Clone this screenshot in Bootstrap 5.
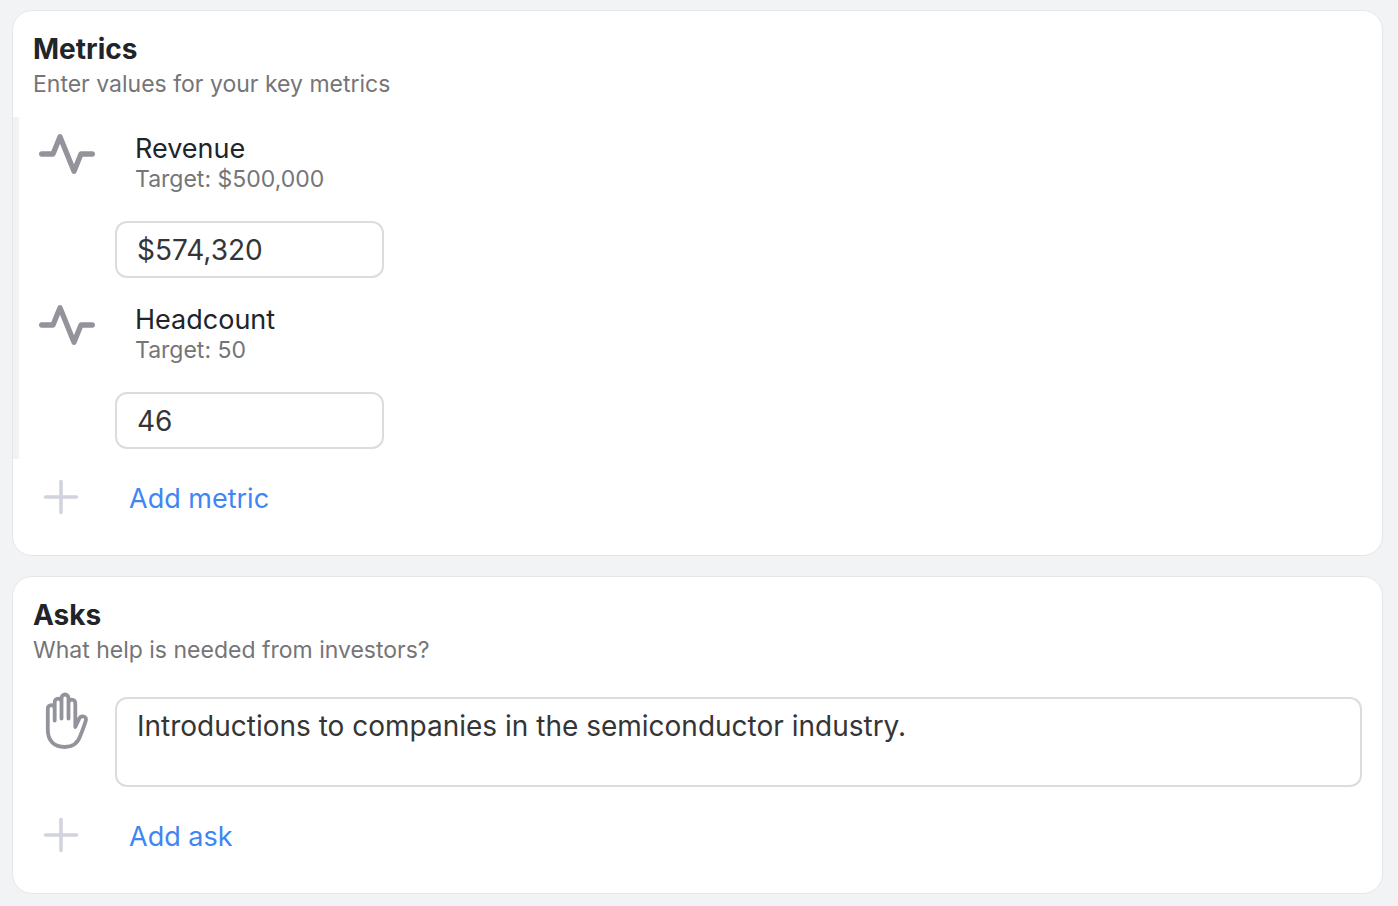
<!DOCTYPE html>
<html lang="en">
<head>
<meta charset="utf-8">
<meta name="viewport" content="width=device-width, initial-scale=1">
<title>Metrics and asks</title>
<link href="https://cdn.jsdelivr.net/npm/bootstrap@5.3.0/dist/css/bootstrap.min.css" rel="stylesheet">
<style>
body { background: #f2f3f5; color: #212429; font-family: Inter, "Liberation Sans", sans-serif; padding: 10px 15px 12px 12px; }
.page { gap: 20px; }
.panel { border: 1px solid #e5e6ea; border-radius: 20px; background: #fff; padding: 21px 0 40px; }
.panel-head { padding: 0 20px; }
.panel-title { font-size: 28px; line-height: 34px; font-weight: 700; margin-bottom: 4px; }
.hint { font-size: 23px; line-height: 28px; color: #757577; }
.metric-list { border-left: 6px solid #f2f3f5; margin-top: 19px; }
.metric { padding: 15px 20px 10px 0; }
.icon-col { flex: 0 0 96px; }
.metric .icon-col { padding-left: 20px; }
.metric-text { padding: 1px 0 0 20px; }
.metric-name { font-size: 27px; line-height: 32px; }
.field { border: 2px solid #dcdcdd; border-radius: 12px; font-size: 28px; line-height: 34px; color: #353536; padding: 10px 20px; }
.field-value { width: 269px; height: 57px; margin: 28px 0 0 96px; }
.ask { padding: 33px 20px 0 0; }
.ask-icon { flex: 0 0 102px; padding-left: 31px; }
.field-text { height: 90px; resize: none; }
.add { border: 0; color: #3f86f4; font-size: 27px; line-height: 32px; gap: 50px; padding: 0 0 0 30px; }
.add-metric { margin-top: 20px; }
.add-ask { margin-top: 30px; }
svg { display: block; fill: none; stroke: #93939c; stroke-linecap: round; stroke-linejoin: round; }
.icon-plus { stroke: #d1d4dc; }
.icon-hand { margin-top: -5px; }
</style>
</head>
<body>
<main class="page d-flex flex-column">
  <section class="panel">
    <div class="panel-head">
      <h2 class="panel-title">Metrics</h2>
      <p class="hint mb-0">Enter values for your key metrics</p>
    </div>
    <div class="metric-list">
      <div class="metric">
        <div class="d-flex">
          <div class="icon-col"><svg width="56" height="44" viewBox="0 0 56 44" stroke-width="5.3" aria-hidden="true"><path d="M2.7 22H14L21 4.7 35 39.3 42 22H53.3"/></svg></div>
          <div class="metric-text">
            <label class="metric-name d-block" for="revenue">Revenue</label>
            <div class="hint">Target: $500,000</div>
          </div>
        </div>
        <input class="field field-value form-control" id="revenue" type="text" value="$574,320">
      </div>
      <div class="metric">
        <div class="d-flex">
          <div class="icon-col"><svg width="56" height="44" viewBox="0 0 56 44" stroke-width="5.3" aria-hidden="true"><path d="M2.7 22H14L21 4.7 35 39.3 42 22H53.3"/></svg></div>
          <div class="metric-text">
            <label class="metric-name d-block" for="headcount">Headcount</label>
            <div class="hint">Target: 50</div>
          </div>
        </div>
        <input class="field field-value form-control" id="headcount" type="text" value="46">
      </div>
    </div>
    <button class="add add-metric btn d-flex align-items-end" type="button">
      <svg class="icon-plus" width="36" height="36" viewBox="0 0 36 36" stroke-width="3.6" aria-hidden="true"><path d="M2.5 18h31M18 2.5v31"/></svg>
      Add metric
    </button>
  </section>
  <section class="panel">
    <div class="panel-head">
      <h2 class="panel-title">Asks</h2>
      <p class="hint mb-0" id="asks-hint">What help is needed from investors?</p>
    </div>
    <div class="ask d-flex">
      <div class="ask-icon"><svg class="icon-hand" width="46" height="58" viewBox="0 0 46 58" stroke-width="3.8" aria-hidden="true"><path d="M10.7 28.5V10a3.4 3.4 0 0 1 6.8 0V26.5M17.5 10V6a3.5 3.5 0 0 1 7 0V26.5M24.5 11a3.4 3.4 0 0 1 6.8 0V35l4-8.5c1.8-3.6 7.700-2.300 6.600 1.700-1.500 5.300-3.500 10.300-5.500 15.300C34 51 28.500 55 20.600 55 10.500 55 3.800 49 3.800 38V16.500a3.450 3.450 0 0 1 6.900 0"/></svg></div>
      <textarea class="field field-text form-control" aria-labelledby="asks-hint">Introductions to companies in the semiconductor industry.</textarea>
    </div>
    <button class="add add-ask btn d-flex align-items-end" type="button">
      <svg class="icon-plus" width="36" height="36" viewBox="0 0 36 36" stroke-width="3.6" aria-hidden="true"><path d="M2.5 18h31M18 2.5v31"/></svg>
      Add ask
    </button>
  </section>
</main>
<script src="https://cdn.jsdelivr.net/npm/bootstrap@5.3.0/dist/js/bootstrap.bundle.min.js"></script>
</body>
</html>
